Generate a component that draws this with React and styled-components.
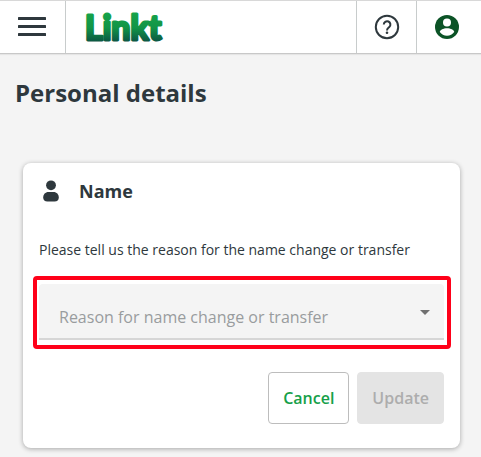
import React, { useState } from 'react'
import styled, { createGlobalStyle } from 'styled-components'

const GlobalStyle = createGlobalStyle`
    *, *::before, *::after{
        box-sizing:border-box;
    }

    body{
        margin:0;
        background:#f4f4f4;
        color:#2e383d;
        font-family:'Open Sans', 'Noto Sans', sans-serif;
        font-size:14px;
    }

    button, select{
        font-family:inherit;
    }
`

const TopBar = styled.header`
    display:flex;
    height:54px;
    padding-right:5px;
    background:#fff;
    border-top:1px solid #d8d8d8;
    border-bottom:1px solid #c8c8c8;
    box-shadow:0 1px 1px rgba(0,0,0,0.06);
`

const BarButton = styled.button`
    display:flex;
    align-items:center;
    justify-content:center;
    width:${props => (props.$wide ? '66px' : '60px')};
    padding:0;
    border:0 solid #c8cccc;
    border-left-width:${props => (props.$wide ? '0' : '1px')};
    border-right-width:${props => (props.$wide ? '1px' : '0')};
    background:transparent;
    color:${props => props.$color || '#2e383d'};
    cursor:pointer;

    & svg{
        display:block;
    }
`

const LogoLink = styled.a`
    display:flex;
    align-items:center;
    margin-right:auto;
    padding-left:16px;
`

const Page = styled.main`
    padding:23px 15px;
`

const Title = styled.h1`
    margin:0;
    font-size:24px;
    line-height:32px;
    font-weight:700;
`

const Card = styled.section`
    margin:54px 6px 0 8px;
    padding:16px 16px 24px;
    background:#fff;
    border-radius:8px;
    box-shadow:0 1px 5px rgba(0,0,0,0.32);
`

const CardHeader = styled.div`
    display:flex;
    align-items:center;
    gap:16px;
    height:24px;
`

const CardTitle = styled.h2`
    margin:0;
    font-size:18px;
    line-height:24px;
    font-weight:700;
`

const Label = styled.label`
    display:block;
    margin-top:35px;
    font-size:14px;
    line-height:24px;
`

const Field = styled.div`
    position:relative;
    margin-top:22px;

    &::after{
        content:'';
        position:absolute;
        inset:-8px -7px -9px -6px;
        border:4px solid #ff0019;
        border-radius:4px;
        pointer-events:none;
    }

    & svg{
        position:absolute;
        right:14px;
        top:26px;
        pointer-events:none;
    }
`

const Select = styled.select`
    display:block;
    width:100%;
    height:56px;
    padding:12px 40px 0 20px;
    appearance:none;
    border:0;
    border-bottom:2px solid #d6d6d6;
    border-radius:4px 4px 0 0;
    background:#f4f4f4;
    color:${props => (props.$empty ? '#999c9e' : '#2e383d')};
    font-size:16px;
    outline:none;
`

const Actions = styled.div`
    display:flex;
    justify-content:flex-end;
    gap:8px;
    margin-top:32px;
`

const Button = styled.button`
    height:52px;
    padding:0 14px;
    border:1px solid #bdbdbd;
    border-radius:4px;
    background:#fff;
    color:#16a049;
    font-size:16px;
    font-weight:600;
    cursor:pointer;

    &:disabled{
        border-color:#e4e4e4;
        background:#e4e4e4;
        color:#adadad;
        cursor:default;
    }
`

const MenuIcon = () => (
    <svg width="30" height="20" viewBox="0 0 30 20" fill="#2e383d" aria-hidden="true">
        <rect x="0" y="0" width="28" height="3" rx="0.5" />
        <rect x="0" y="8" width="28" height="3" rx="0.5" />
        <rect x="0" y="16" width="28" height="3" rx="0.5" />
    </svg>
)

const HelpIcon = () => (
    <svg width="26" height="26" viewBox="0 0 26 26" fill="none" stroke="currentColor" strokeWidth="2" aria-hidden="true">
        <circle cx="13" cy="13" r="11.2" />
        <path d="M9.8 10.6a3.3 3.3 0 1 1 5.5 2.4c-1.4 1.2-2.3 1.6-2.3 3.4" />
        <circle cx="13" cy="18.7" r="1.3" fill="currentColor" stroke="none" />
    </svg>
)

const AccountIcon = () => (
    <svg width="24" height="24" viewBox="0 0 24 24" aria-hidden="true">
        <circle cx="12" cy="12" r="12" fill="currentColor" />
        <circle cx="12" cy="7.6" r="4" fill="#fff" />
        <path d="M12 13.2c-3.6 0-7.2 1.7-7.2 3.8 1.6 2.3 4.2 3.7 7.2 3.7s5.6-1.4 7.2-3.7c0-2.1-3.6-3.8-7.2-3.8z" fill="#fff" />
    </svg>
)

const PersonIcon = () => (
    <svg width="24" height="24" viewBox="0 0 24 24" fill="#2e383d" aria-hidden="true">
        <circle cx="12" cy="6.3" r="4.9" />
        <path d="M9.5 13h5c3.2 0 5.3 2.4 5.3 5.6 0 2.9-1.6 4-4.2 4H8.4c-2.6 0-4.2-1.1-4.2-4C4.2 15.4 6.3 13 9.5 13z" />
    </svg>
)

const Logo = () => (
    <svg width="88" height="52" viewBox="0 0 88 52" role="img" aria-label="Linkt">
        <defs>
            <linearGradient id="logoGreen" gradientUnits="userSpaceOnUse" x1="0" y1="12" x2="0" y2="42">
                <stop offset="0" stopColor="#16a34a" />
                <stop offset="0.5" stopColor="#129447" />
                <stop offset="1" stopColor="#0a5043" />
            </linearGradient>
        </defs>
        <text
            x="3"
            y="39"
            fontFamily="Lato, sans-serif"
            fontSize="34"
            fontWeight="700"
            fill="url(#logoGreen)"
            stroke="url(#logoGreen)"
            strokeWidth="3"
            strokeLinejoin="round"
        >
            Linkt
        </text>
    </svg>
)

const App = () => {
    const [reason, setReason] = useState('')

    return (
        <>
            <GlobalStyle />
            <TopBar>
                <BarButton $wide type="button" aria-label="Menu"><MenuIcon /></BarButton>
                <LogoLink href="#"><Logo /></LogoLink>
                <BarButton type="button" aria-label="Help"><HelpIcon /></BarButton>
                <BarButton type="button" aria-label="Account" $color="#0b5326"><AccountIcon /></BarButton>
            </TopBar>
            <Page>
                <Title>Personal details</Title>
                <Card>
                    <CardHeader>
                        <PersonIcon />
                        <CardTitle>Name</CardTitle>
                    </CardHeader>
                    <Label htmlFor="reason">Please tell us the reason for the name change or transfer</Label>
                    <Field>
                        <Select id="reason" value={reason} $empty={!reason} onChange={e => setReason(e.target.value)}>
                            <option value="">Reason for name change or transfer</option>
                        </Select>
                        <svg width="10" height="5" viewBox="0 0 10 5" fill="#707070" aria-hidden="true">
                            <path d="M0 0h10L5 5z" />
                        </svg>
                    </Field>
                    <Actions>
                        <Button type="button">Cancel</Button>
                        <Button type="button" disabled={!reason}>Update</Button>
                    </Actions>
                </Card>
            </Page>
        </>
    )
}

export default App
